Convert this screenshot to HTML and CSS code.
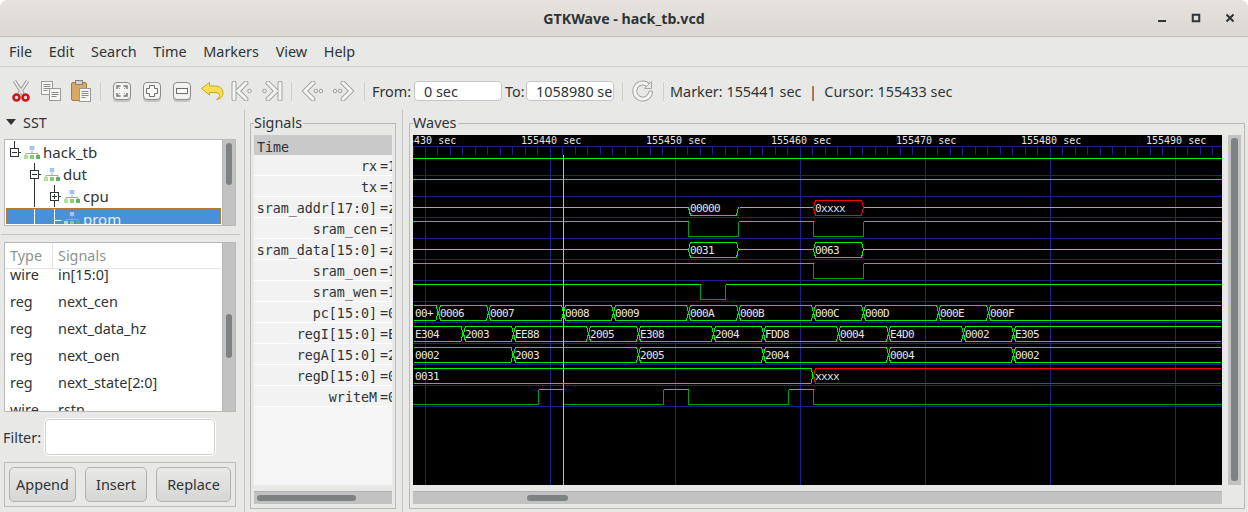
FILE: index.html
```html
<!DOCTYPE html>
<html lang="en">
<head>
<meta charset="utf-8">
<title>GTKWave - hack_tb.vcd</title>
<link rel="stylesheet" href="styles.css">
</head>
<body>
<div class="window">
  <header class="titlebar">
    <div class="title">GTKWave - hack_tb.vcd</div>
    <div class="controls">
      <svg width="10" height="10" viewBox="0 0 10 10"><rect x="1" y="7" width="8" height="2" fill="#2e3436"/></svg>
      <svg width="10" height="10" viewBox="0 0 10 10"><rect x="1.75" y="1.75" width="6.5" height="6.5" fill="none" stroke="#2e3436" stroke-width="2"/></svg>
      <svg width="10" height="10" viewBox="0 0 10 10"><path d="M1.5 1.5l7 7M8.5 1.5l-7 7" stroke="#2e3436" stroke-width="2" fill="none"/></svg>
    </div>
  </header>
  <nav class="menubar">
    <span>File</span><span>Edit</span><span>Search</span><span>Time</span><span>Markers</span><span>View</span><span>Help</span>
  </nav>
  <div class="toolbar">
    <div class="tool"><svg width="20" height="24" viewBox="0 0 20 24"><path d="M3.5 2L12 15M16.500 2L8 15" stroke="#8e8e8c" stroke-width="3.6" fill="none"/><path d="M3.500 2L12 15M16.500 2L8 15" stroke="#e8e8e6" stroke-width="2" fill="none"/><circle cx="5.500" cy="18.500" r="3" fill="#f4d8d8" stroke="#c81818" stroke-width="2.600"/><circle cx="14.500" cy="18.500" r="3" fill="#f4d8d8" stroke="#c81818" stroke-width="2.600"/></svg></div>
    <div class="tool"><svg width="22" height="22" viewBox="0 0 22 22"><rect x="1.500" y="1.500" width="11" height="13" fill="#f6f6f5" stroke="#9a9a98"/><path d="M3.500 4.500h7M3.500 6.500h7M3.500 8.500h7M3.500 10.500h4" stroke="#8a8a88"/><rect x="9.500" y="8.500" width="11" height="12" fill="#f6f6f5" stroke="#9a9a98"/><path d="M11.500 12.500h7M11.500 14.500h7M11.500 16.500h5" stroke="#8a8a88"/></svg></div>
    <div class="tool"><svg width="22" height="22" viewBox="0 0 22 22"><rect x="1.500" y="2.500" width="15" height="18" rx="1.500" fill="#d9a865" stroke="#ab7a3c"/><rect x="5.500" y="0.500" width="7" height="4" fill="#d2d2d0" stroke="#85857f"/><rect x="9.500" y="8.500" width="11" height="13" fill="#f6f6f5" stroke="#9a9a98"/><path d="M11.500 11.500h7M11.500 13.500h7M11.500 15.500h7M11.500 17.500h4" stroke="#8a8a88"/></svg></div>
    <div class="sep"></div>
    <div class="tool"><svg width="20" height="21" viewBox="0 0 20 21"><rect class="key-shadow" x="1" y="3" width="18" height="18" rx="4"/><rect class="key" x="1.500" y="1.500" width="17" height="17" rx="3.500"/><path d="M5 8V5h3.500M11.500 5H15v3M15 12v3h-3.500M8.500 15H5v-3" fill="none" stroke="#77776f" stroke-width="1.500"/><path d="M8 8l-1.500-1.500M12 8l1.500-1.500M12 12l1.500 1.500M8 12l-1.500 1.500" stroke="#9a9a96"/></svg></div>
    <div class="tool"><svg width="20" height="21" viewBox="0 0 20 21"><rect class="key-shadow" x="1" y="3" width="18" height="18" rx="4"/><rect class="key" x="1.500" y="1.500" width="17" height="17" rx="3.500"/><path d="M7.500 4.500h5v3h3v5h-3v3h-5v-3h-3v-5h3z" fill="#fbfbfb" stroke="#6f6f69"/></svg></div>
    <div class="tool"><svg width="20" height="21" viewBox="0 0 20 21"><rect class="key-shadow" x="1" y="3" width="18" height="18" rx="4"/><rect class="key" x="1.500" y="1.500" width="17" height="17" rx="3.500"/><rect x="4.500" y="7.500" width="11" height="5" fill="#fbfbfb" stroke="#6f6f69"/></svg></div>
    <div class="tool"><svg width="24" height="20" viewBox="0 0 24 20"><path d="M1.500 7.500L9.500 1.500v3.500h5c5 0 8.500 2.500 8.500 7 0 3.500-2.500 6-6.500 6.500 2-1 3-2.500 3-4 0-2-1.500-3-4.500-3H9.500V14z" fill="#f6df50" stroke="#c9a41f" stroke-linejoin="round"/></svg></div>
    <div class="tool"><svg width="22" height="20" viewBox="0 0 22 20"><path class="nav-o" d="M3 2v16M15 2L7 10l8 8"/><path class="nav-i" d="M3 2v16M15 2L7 10l8 8"/><circle class="nav-d" cx="18.500" cy="10" r="1.800"/></svg></div>
    <div class="tool"><svg width="22" height="20" viewBox="0 0 22 20"><path class="nav-o" d="M19 2v16M7 2l8 8-8 8"/><path class="nav-i" d="M19 2v16M7 2l8 8-8 8"/><circle class="nav-d" cx="3.500" cy="10" r="1.800"/></svg></div>
    <div class="sep"></div>
    <div class="tool"><svg width="22" height="20" viewBox="0 0 22 20"><path class="nav-o" d="M11 2L3 10l8 8"/><path class="nav-i" d="M11 2L3 10l8 8"/><circle class="nav-d" cx="14" cy="10" r="1.800"/><circle class="nav-d" cx="19" cy="10" r="1.800"/></svg></div>
    <div class="tool"><svg width="22" height="20" viewBox="0 0 22 20"><path class="nav-o" d="M11 2l8 8-8 8"/><path class="nav-i" d="M11 2l8 8-8 8"/><circle class="nav-d" cx="3" cy="10" r="1.800"/><circle class="nav-d" cx="8" cy="10" r="1.800"/></svg></div>
    <div class="sep sep-last"></div>
    <label class="field-label from-label">From:</label>
    <input class="entry" value="0 sec">
    <label class="field-label to-label">To:</label>
    <input class="entry" value="1058980 sec">
    <div class="sep sep-reload"></div>
    <div class="tool"><svg width="22" height="22" viewBox="0 0 22 22"><path class="nav-o" d="M16.500 5.500A8 8 0 1 0 18.500 13"/><path class="nav-i" d="M16.500 5.500A8 8 0 1 0 18.500 13"/><path d="M19.500 1.500v7h-7z" fill="#e8e8e6" stroke="#a6a6a4"/></svg></div>
    <div class="sep sep-status"></div>
    <div class="status">Marker: 155441 sec  |  Cursor: 155433 sec</div>
  </div>
  <main class="panes">
    <section class="pane-left">
      <div class="sst-head">
        <svg width="10" height="6" viewBox="0 0 10 6"><path d="M0 0h10L5 6z" fill="#2e3436"/></svg>
        <span>SST</span>
      </div>
      <div class="list-frame tree-frame">
        <div class="tree-view"><div class="tree-clip">
          <div class="tree-row">
            <svg class="cell" width="20" height="22" viewBox="0 0 20 22"><path class="tl" d="M9.500 0v7M14 11.500h2"/><rect class="tb" x="5.500" y="7.500" width="8" height="8"/><path class="tl" d="M7 11.500h5"/></svg>
            <svg class="hier" width="16" height="14" viewBox="0 0 16 14"><use href="#hier"/></svg>
            <span>hack_tb</span>
          </div>
          <div class="tree-row">
            <span class="blank"></span>
            <svg class="cell" width="20" height="22" viewBox="0 0 20 22"><path class="tl" d="M9.500 0v7M9.500 15v7M14 11.500h2"/><rect class="tb" x="5.500" y="7.500" width="8" height="8"/><path class="tl" d="M7 11.500h5"/></svg>
            <svg class="hier" width="16" height="14" viewBox="0 0 16 14"><use href="#hier"/></svg>
            <span>dut</span>
          </div>
          <div class="tree-row">
            <span class="blank"></span>
            <svg class="cell" width="20" height="22" viewBox="0 0 20 22"><path class="tl" d="M9.500 0v22"/></svg>
            <svg class="cell" width="20" height="22" viewBox="0 0 20 22"><path class="tl" d="M9.500 0v7M9.500 15v7M14 11.500h2"/><rect class="tb" x="5.500" y="7.500" width="8" height="8"/><path class="tl" d="M7 11.500h5M9.500 9v5"/></svg>
            <svg class="hier" width="16" height="14" viewBox="0 0 16 14"><use href="#hier"/></svg>
            <span>cpu</span>
          </div>
          <div class="tree-row selected">
            <span class="blank"></span>
            <svg class="cell" width="20" height="22" viewBox="0 0 20 22"><path class="tw" d="M9.500 0v22"/></svg>
            <svg class="cell" width="20" height="22" viewBox="0 0 20 22"><path class="tw" d="M9.500 0v22M9.500 11.500h7"/></svg>
            <svg class="hier" width="16" height="14" viewBox="0 0 16 14"><use href="#hier"/></svg>
            <span>prom</span>
          </div>
        </div></div>
        <div class="vscroll"><div class="thumb tree-thumb"></div></div>
      </div>
      <div class="hdivider"></div>
      <div class="list-frame signal-frame">
        <div class="sig-view">
          <div class="sig-head"><span class="col-type">Type</span><span class="col-name">Signals</span></div>
          <div class="sig-body">
            <div class="sig-row"><span class="col-type">wire</span><span class="col-name">in[15:0]</span></div>
            <div class="sig-row"><span class="col-type">reg</span><span class="col-name">next_cen</span></div>
            <div class="sig-row"><span class="col-type">reg</span><span class="col-name">next_data_hz</span></div>
            <div class="sig-row"><span class="col-type">reg</span><span class="col-name">next_oen</span></div>
            <div class="sig-row"><span class="col-type">reg</span><span class="col-name">next_state[2:0]</span></div>
            <div class="sig-row"><span class="col-type">wire</span><span class="col-name">rstn</span></div>
          </div>
        </div>
        <div class="vscroll"><div class="thumb sig-thumb"></div></div>
      </div>
      <div class="filter-row">
        <label>Filter:</label>
        <input class="filter-entry">
      </div>
      <div class="button-frame">
        <button class="btn-append">Append</button>
        <button class="btn-insert">Insert</button>
        <button class="btn-replace">Replace</button>
      </div>
    </section>
    <section class="pane-signals">
      <fieldset class="frame signals-frame">
        <legend>Signals</legend>
        <div class="signal-names">
          <div class="time-row">Time</div>
          <div class="name-row"><span class="name">rx</span><span class="value">=1</span></div>
          <div class="name-row"><span class="name">tx</span><span class="value">=1</span></div>
          <div class="name-row"><span class="name">sram_addr[17:0]</span><span class="value">=z</span></div>
          <div class="name-row"><span class="name">sram_cen</span><span class="value">=1</span></div>
          <div class="name-row"><span class="name">sram_data[15:0]</span><span class="value">=z</span></div>
          <div class="name-row"><span class="name">sram_oen</span><span class="value">=1</span></div>
          <div class="name-row"><span class="name">sram_wen</span><span class="value">=1</span></div>
          <div class="name-row"><span class="name">pc[15:0]</span><span class="value">=0</span></div>
          <div class="name-row"><span class="name">regI[15:0]</span><span class="value">=E</span></div>
          <div class="name-row"><span class="name">regA[15:0]</span><span class="value">=2</span></div>
          <div class="name-row"><span class="name">regD[15:0]</span><span class="value">=0</span></div>
          <div class="name-row"><span class="name">writeM</span><span class="value">=0</span></div>
        </div>
        <div class="hscroll"><div class="hthumb names-thumb"></div></div>
      </fieldset>
    </section>
    <section class="pane-waves">
      <fieldset class="frame waves-frame">
        <legend>Waves</legend>
        <div class="waves-grid">
          <div class="waves-main">
            <svg class="wavecanvas" width="809" height="350" viewBox="413 135 809 350">
              <defs>
                <pattern id="ticks" x="0" y="147" width="25" height="8" patternUnits="userSpaceOnUse">
                  <rect x="0" y="0" width="1" height="8" fill="#20208c"/>
                  <rect x="12" y="0" width="1" height="8" fill="#20208c"/>
                </pattern>
              </defs>
              <rect x="413" y="135" width="809" height="350" fill="#000"/>
              <rect x="413" y="147" width="809" height="8" fill="url(#ticks)"/>
              <path class="grid" d="M413 146.500H1222M413.500 147v8M413 175.500H1222M413 196.500H1222M413 217.500H1222M413 238.500H1222M413 259.500H1222M413 280.500H1222M413 301.500H1222M413 322.500H1222M413 343.500H1222M413 364.500H1222M413 385.500H1222M413 406.500H1222"/>
              <path class="grid" d="M425.500 147V485M550.500 147V485M675.500 147V485M800.500 147V485M925.500 147V485M1050.500 147V485M1175.500 147V485"/>
              <g class="ruler">
                <text x="396" y="144">155430 sec</text>
                <text x="521" y="144">155440 sec</text>
                <text x="646" y="144">155450 sec</text>
                <text x="771" y="144">155460 sec</text>
                <text x="896" y="144">155470 sec</text>
                <text x="1021" y="144">155480 sec</text>
                <text x="1146" y="144">155490 sec</text>
              </g>
              <path class="hi" d="M413 158.500H1222M413 179.500H1222"/>
              <path class="z" d="M413 207.500H688M740 207.500H813M864 207.500H1222M413 249.500H688M739 249.500H813M864 249.500H1222"/>
              <path class="vec" d="M688.500 207.500l2 8h46l2-8"/>
              <path class="red" d="M813.500 207.500l2-7h46l2 7-2 8h-46z"/>
              <path class="hi" d="M413 221.500H688.500M738.500 221.500H813.500M863.500 221.500H1222"/>
              <path class="lo" d="M688.500 221.500V236.500H738.500V221.500M813.500 221.500V236.500H863.500V221.500"/>
              <path class="vec" d="M688.500 249.500l2-7h46l2 7-2 8h-46zM813.500 249.500l2-7h46l2 7-2 8h-46z"/>
              <path class="hi" d="M413 263.500H813.500M863.500 263.500H1222"/>
              <path class="lo" d="M813.500 263.500V278.500H863.500V263.500"/>
              <path class="hi" d="M413 284.500H700.500M725.500 284.500H1222"/>
              <path class="lo" d="M700.500 284.500V299.500H725.500V284.500"/>
              <path class="vec" d="M414 305.500H436l2 7-2 8H414M438.500 312.500l2-7h46l2 7-2 8h-46zM488.500 312.500l2-7h71l2 7-2 8h-71zM563.500 312.500l2-7h46l2 7-2 8h-46zM613.500 312.500l2-7h71l2 7-2 8h-71zM688.500 312.500l2-7h46l2 7-2 8h-46zM738.500 312.500l2-7h71l2 7-2 8h-71zM813.500 312.500l2-7h46l2 7-2 8h-46zM863.500 312.500l2-7h71l2 7-2 8h-71zM938.500 312.500l2-7h46l2 7-2 8h-46zM1221 305.500H990.500l-2 7 2 8H1221"/>
              <path class="vec" d="M414 326.500H461l2 7-2 8H414M463.500 333.500l2-7h46l2 7-2 8h-46zM513.500 333.500l2-7h71l2 7-2 8h-71zM588.500 333.500l2-7h46l2 7-2 8h-46zM638.500 333.500l2-7h71l2 7-2 8h-71zM713.500 333.500l2-7h46l2 7-2 8h-46zM763.500 333.500l2-7h71l2 7-2 8h-71zM838.500 333.500l2-7h46l2 7-2 8h-46zM888.500 333.500l2-7h71l2 7-2 8h-71zM963.500 333.500l2-7h46l2 7-2 8h-46zM1221 326.500H1015.500l-2 7 2 8H1221"/>
              <path class="vec" d="M414 347.500H511l2 7-2 8H414M513.500 354.500l2-7h121l2 7-2 8h-121zM638.500 354.500l2-7h121l2 7-2 8h-121zM763.500 354.500l2-7h121l2 7-2 8h-121zM888.500 354.500l2-7h121l2 7-2 8h-121zM1221 347.500H1015.500l-2 7 2 8H1221"/>
              <path class="vec" d="M414 368.500H811l2 7-2 8H414"/>
              <path class="red" d="M1221 368.500H815.500l-2 7 2 8H1221"/>
              <path class="lo" d="M413 404.500H538.500M563.500 404.500H663.500M688.500 404.500H788.500M813.500 404.500H1222"/>
              <path class="lo" d="M538.500 404.500V389.500M563.500 404.500V389.500M663.500 404.500V389.500M688.500 404.500V389.500M788.500 404.500V389.500M813.500 404.500V389.500"/>
              <path class="hi" d="M538.500 389.500H563.500M663.500 389.500H688.500M788.500 389.500H813.500"/>
              <g class="val">
                <text x="690" y="212">00000</text><text x="815" y="212">0xxxx</text>
                <text x="690" y="254">0031</text><text x="815" y="254">0063</text>
                <text x="415" y="317">00+</text><text x="440" y="317">0006</text><text x="490" y="317">0007</text><text x="565" y="317">0008</text><text x="615" y="317">0009</text><text x="690" y="317">000A</text><text x="740" y="317">000B</text><text x="815" y="317">000C</text><text x="865" y="317">000D</text><text x="940" y="317">000E</text><text x="990" y="317">000F</text>
                <text x="415" y="338">E304</text><text x="465" y="338">2003</text><text x="515" y="338">EE88</text><text x="590" y="338">2005</text><text x="640" y="338">E308</text><text x="715" y="338">2004</text><text x="765" y="338">FDD8</text><text x="840" y="338">0004</text><text x="890" y="338">E4D0</text><text x="965" y="338">0002</text><text x="1015" y="338">E305</text>
                <text x="415" y="359">0002</text><text x="515" y="359">2003</text><text x="640" y="359">2005</text><text x="765" y="359">2004</text><text x="890" y="359">0004</text><text x="1015" y="359">0002</text>
                <text x="415" y="380">0031</text><text x="815" y="380">xxxx</text>
              </g>
              <path class="cursor" d="M563.500 155V485"/>
            </svg>
            <div class="hscroll"><div class="hthumb waves-thumb"></div></div>
          </div>
          <div class="wave-vscroll"><div class="wave-vthumb"></div></div>
        </div>
      </fieldset>
    </section>
  </main>
</div>
<svg class="defs" width="0" height="0">
  <symbol id="hier" viewBox="0 0 16 14">
    <path d="M8 5v3M2 9V7.500h12V9" fill="none" stroke="#a5a5a3"/>
    <rect x="6" y="0" width="4" height="4" fill="#a9c9ef" stroke="#8fb2e0" stroke-width=".5"/>
    <rect x="0" y="9" width="4" height="4" fill="#b4e09c"/>
    <rect x="6" y="9" width="4" height="4" fill="#86cd76"/>
    <rect x="12" y="9" width="4" height="4" fill="#5fb263"/>
  </symbol>
</svg>
</body>
</html>
```
FILE: styles.css
```css
* { box-sizing: border-box; }
html, body { margin: 0; padding: 0; background: #fff; }
body { font-family: "Noto Sans", sans-serif; font-size: 14.4px; color: #2e3436; overflow: hidden; }
.defs { position: absolute; }
input, button { font: inherit; color: inherit; }

.window { width: 1248px; height: 512px; display: flex; flex-direction: column; background: #e8e8e7; border-radius: 8px 8px 0 0; overflow: hidden; }

.titlebar { height: 37px; flex: none; display: flex; align-items: center; justify-content: center; position: relative; background: linear-gradient(#e6e3df, #dbd8d3); border-bottom: 1px solid #c8bfb4; }
.title { font-weight: 700; font-size: 14.2px; }
.controls { position: absolute; right: 13px; top: 13px; display: flex; gap: 24px; }
.controls svg { display: block; }

.menubar { height: 30px; flex: none; display: flex; align-items: center; padding: 0 9px 1px; gap: 16.67px; border-bottom: 1px solid #d2d2d0; }

.toolbar { height: 43px; flex: none; display: flex; align-items: center; padding: 5px 0 0 6px; }
.tool { width: 30px; display: flex; justify-content: center; align-items: center; flex: none; }
.tool svg { display: block; }
.key { fill: #f3f3f2; stroke: #8b8b89; }
.key-shadow { fill: #c4c4c2; }
.nav-o { fill: none; stroke: #a2a2a0; stroke-width: 5; stroke-linecap: round; }
.nav-i { fill: none; stroke: #f4f4f3; stroke-width: 3; stroke-linecap: round; }
.nav-d { fill: #ededec; stroke: #9d9d9b; }
.sep { width: 1px; height: 19px; background: #cfcfcd; margin: 0 6px 0 4px; flex: none; }
.sep-last { margin: 0 7px 0 6px; }
.sep-reload { margin: 0 5px 0 8px; }
.sep-status { margin: 0 6px 0 5px; }
.field-label { flex: none; }
.from-label { width: 42px; }
.to-label { width: 21px; margin-left: 3px; }
.entry { height: 20px; width: 88px; border: 1px solid #c6c6c4; border-radius: 4px; background: #fff; padding: 0 1px 0 9px; outline: none; flex: none; }
.status { white-space: pre; flex: none; }

.panes { flex: 1; min-height: 0; display: flex; }
.pane-left { width: 245px; flex: none; border-right: 1px solid #c4c4c2; display: flex; flex-direction: column; padding: 0 8px 0 4px; }
.sst-head { height: 29px; flex: none; display: flex; align-items: center; gap: 7px; padding: 0 0 5px 2px; }
.list-frame { width: 232px; flex: none; display: flex; border: 1px solid #b9b9b7; }
.tree-frame { height: 87px; }
.tree-view { width: 217px; background: #fff; height: 85px; flex: none; }
.tree-clip { height: 84px; overflow: hidden; padding-top: 1px; }
.tree-row { height: 22px; display: flex; align-items: center; font-size: 15px; white-space: nowrap; }
.tree-row > span:last-child { margin-left: 3px; }
.cell { display: block; flex: none; }
.hier { display: block; flex: none; margin: 1px 0 0 -1px; }
.blank { width: 20px; flex: none; }
.tl { fill: none; stroke: #2e3436; }
.tw { fill: none; stroke: #fff; }
.tb { fill: #fff; stroke: #2e3436; }
.selected { height: 24px; margin: 1px 1px 0; padding-bottom: 4px; background: #4a90d9; color: #e4eefa; border: 1px solid #b87a30; border-bottom: none; }
.selected .blank { width: 18px; }
.selected .cell { margin-top: 3px; }
.vscroll { flex: 1; background: #c1c2c1; border-left: 1px solid #b4b5b4; position: relative; }
.thumb { width: 6px; margin-left: 3px; background: #7f8282; border-radius: 3px; }
.tree-thumb { height: 42px; margin-top: 3px; }
.sig-thumb { height: 44px; margin-top: 71px; }

.hdivider { height: 1px; flex: none; background: #c4c4c2; margin: 8px -4px 7px -3px; }
.signal-frame { height: 170px; }
.sig-view { width: 217px; background: #fff; flex: none; overflow: hidden; display: flex; flex-direction: column; }
.sig-head { height: 26px; flex: none; display: flex; align-items: center; color: #8f9292; border-bottom: 1px solid #e4e4e4; }
.sig-head .col-type { border-right: 1px solid #e4e4e4; height: 25px; line-height: 25px; }
.col-type { width: 48px; padding-left: 5px; flex: none; }
.col-name { padding-left: 5px; }
.sig-body { flex: 1; min-height: 0; overflow: hidden; }
.sig-row { height: 27px; display: flex; align-items: center; }
.sig-row:first-child { margin-top: -8px; }

.filter-row { height: 38px; margin-top: 6px; flex: none; display: flex; align-items: center; margin-left: -1px; gap: 3px; }
.filter-entry { width: 172px; height: 38px; border: 1px solid #fff; box-shadow: inset 0 0 0 1px #cfcfcd; border-radius: 5px; background: #fff; outline: none; }
.button-frame { width: 232px; height: 45px; flex: none; margin-top: 6px; border: 1px solid #bcbcba; display: flex; align-items: center; padding: 0 4px; gap: 9px; }
.button-frame button { height: 35px; border: 1px solid #b1b1af; border-radius: 5px; background: linear-gradient(#e9e9e8, #d6d6d5); padding: 0; flex: none; }
.btn-append { width: 67px; }
.btn-insert { width: 62px; }
.btn-replace { width: 75px; }

.pane-signals { width: 158px; flex: none; border-right: 1px solid #c4c4c2; padding: 3px 6px 0 5px; }
.pane-waves { flex: 1; padding: 3px 3px 0 6px; }
.frame { margin: 0; padding: 2px 3px 4px; border: 1px solid #b9b9b7; min-width: 0; display: block; }
.frame legend { padding: 0 1px 0 0; height: 20px; line-height: 20px; }
.signals-frame { width: 146px; }
.signal-names { height: 350px; background: #f5f5f5; font-family: "DejaVu Sans Mono", monospace; font-size: 13.33px; overflow: hidden; }
.time-row { height: 20px; background: #c9c9c9; padding-left: 3px; line-height: 25px; }
.name-row { height: 21px; display: flex; background: #f2f2f2; border-bottom: 1px solid #fff; white-space: nowrap; line-height: 23px; }
.name { width: 123px; flex: none; text-align: right; }
.value { margin-left: 3px; }
.hscroll { height: 13px; margin-top: 6px; background: #c1c2c1; border-top: 1px solid #b0b1b0; }
.hthumb { height: 6px; margin-top: 3px; background: #7f8282; border-radius: 3px; }
.names-thumb { width: 99px; margin-left: 3px; }
.waves-thumb { width: 41px; margin-left: 114px; }
.waves-thumb, .names-thumb { position: relative; top: 3px; margin-top: 0; }

.waves-frame { width: 836px; }
.waves-grid { display: flex; gap: 6px; }
.waves-main { width: 809px; flex: none; }
.wavecanvas { display: block; shape-rendering: crispEdges; background: #000; }
.wave-vscroll { width: 13px; flex: none; height: 350px; background: #c1c2c1; padding: 3px 3px; }
.wave-vthumb { height: 343px; width: 7px; background: #7f8282; border-radius: 3px; }

.grid { fill: none; stroke: #20208c; }
.ruler { font-family: "DejaVu Sans Mono", monospace; font-size: 10px; fill: #e6e6e6; }
.val { font-family: "DejaVu Sans Mono", monospace; font-size: 11px; letter-spacing: -0.62px; fill: #e6e6e6; }
.hi { fill: none; stroke: #00f000; }
.lo { fill: none; stroke: #00a000; }
.vec { fill: none; stroke: #00f000; }
.red { fill: none; stroke: #ff0000; }
.z { fill: none; stroke: #bdb41e; }
.cursor { fill: none; stroke: #f2a69e; }
```
